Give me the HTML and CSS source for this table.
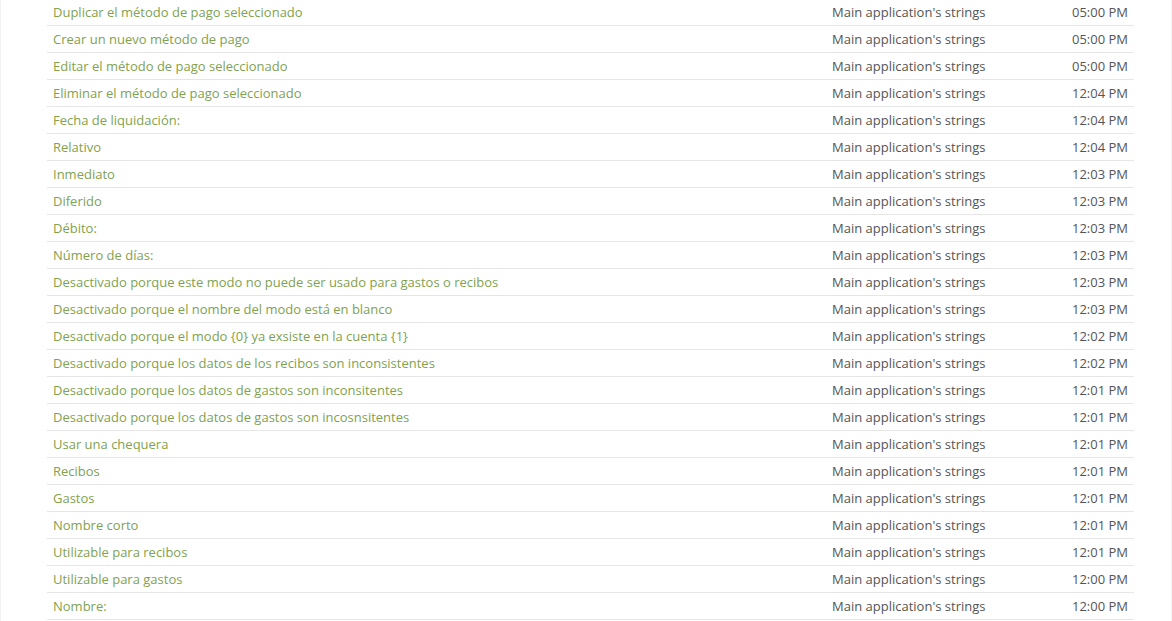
FILE: index.html
```html
<!DOCTYPE html>
<html lang="es">
<head>
<meta charset="utf-8">
<title>Strings</title>
<link rel="stylesheet" href="styles.css">
</head>
<body>
<div class="panel">
  <div class="list">
    <div class="row"><a class="name" href="#">Duplicar el método de pago seleccionado</a><span class="file">Main application's strings</span><span class="time">05:00 PM</span></div>
    <div class="row"><a class="name" href="#">Crear un nuevo método de pago</a><span class="file">Main application's strings</span><span class="time">05:00 PM</span></div>
    <div class="row"><a class="name" href="#">Editar el método de pago seleccionado</a><span class="file">Main application's strings</span><span class="time">05:00 PM</span></div>
    <div class="row"><a class="name" href="#">Eliminar el método de pago seleccionado</a><span class="file">Main application's strings</span><span class="time">12:04 PM</span></div>
    <div class="row"><a class="name" href="#">Fecha de liquidación:</a><span class="file">Main application's strings</span><span class="time">12:04 PM</span></div>
    <div class="row"><a class="name" href="#">Relativo</a><span class="file">Main application's strings</span><span class="time">12:04 PM</span></div>
    <div class="row"><a class="name" href="#">Inmediato</a><span class="file">Main application's strings</span><span class="time">12:03 PM</span></div>
    <div class="row"><a class="name" href="#">Diferido</a><span class="file">Main application's strings</span><span class="time">12:03 PM</span></div>
    <div class="row"><a class="name" href="#">Débito:</a><span class="file">Main application's strings</span><span class="time">12:03 PM</span></div>
    <div class="row"><a class="name" href="#">Número de días:</a><span class="file">Main application's strings</span><span class="time">12:03 PM</span></div>
    <div class="row"><a class="name" href="#">Desactivado porque este modo no puede ser usado para gastos o recibos</a><span class="file">Main application's strings</span><span class="time">12:03 PM</span></div>
    <div class="row"><a class="name" href="#">Desactivado porque el nombre del modo está en blanco</a><span class="file">Main application's strings</span><span class="time">12:03 PM</span></div>
    <div class="row"><a class="name" href="#">Desactivado porque el modo {0} ya exsiste en la cuenta {1}</a><span class="file">Main application's strings</span><span class="time">12:02 PM</span></div>
    <div class="row"><a class="name" href="#">Desactivado porque los datos de los recibos son inconsistentes</a><span class="file">Main application's strings</span><span class="time">12:02 PM</span></div>
    <div class="row"><a class="name" href="#">Desactivado porque los datos de gastos son inconsitentes</a><span class="file">Main application's strings</span><span class="time">12:01 PM</span></div>
    <div class="row"><a class="name" href="#">Desactivado porque los datos de gastos son incosnsitentes</a><span class="file">Main application's strings</span><span class="time">12:01 PM</span></div>
    <div class="row"><a class="name" href="#">Usar una chequera</a><span class="file">Main application's strings</span><span class="time">12:01 PM</span></div>
    <div class="row"><a class="name" href="#">Recibos</a><span class="file">Main application's strings</span><span class="time">12:01 PM</span></div>
    <div class="row"><a class="name" href="#">Gastos</a><span class="file">Main application's strings</span><span class="time">12:01 PM</span></div>
    <div class="row"><a class="name" href="#">Nombre corto</a><span class="file">Main application's strings</span><span class="time">12:01 PM</span></div>
    <div class="row"><a class="name" href="#">Utilizable para recibos</a><span class="file">Main application's strings</span><span class="time">12:01 PM</span></div>
    <div class="row"><a class="name" href="#">Utilizable para gastos</a><span class="file">Main application's strings</span><span class="time">12:00 PM</span></div>
    <div class="row"><a class="name" href="#">Nombre:</a><span class="file">Main application's strings</span><span class="time">12:00 PM</span></div>
  </div>
</div>
</body>
</html>
```
FILE: styles.css
```css
html, body {
  margin: 0;
  padding: 0;
  background: #ffffff;
}

body {
  font-family: "Open Sans", "Liberation Sans", sans-serif;
  font-size: 13px;
  overflow: hidden;
}

.panel {
  width: 1172px;
  height: 621px;
  box-sizing: border-box;
  border-left: 1px solid #f3f3f3;
  border-right: 1px solid #f3f3f3;
  overflow: hidden;
}

.list {
  margin: -1px 0 0 46px;
  width: 1087px;
}

.row {
  display: grid;
  grid-template-columns: 1fr 220px 82px;
  align-items: center;
  height: 26px;
  border-bottom: 1px solid #e6e6e6;
}

.name {
  padding-left: 6px;
  color: #7fa24f;
  text-decoration: none;
  white-space: nowrap;
}

.file {
  color: #555555;
  white-space: nowrap;
}

.time {
  color: #555555;
  text-align: right;
  padding-right: 6px;
  white-space: nowrap;
}
```
